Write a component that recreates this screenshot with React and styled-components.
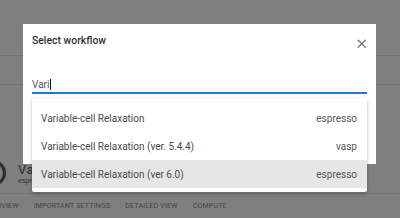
import React from "react";
import styled, { createGlobalStyle } from "styled-components";

const GlobalStyle = createGlobalStyle`
  html, body { margin: 0; padding: 0; }
  body {
    width: 400px;
    height: 218px;
    overflow: hidden;
    font-family: Roboto, "Liberation Sans", Arial, sans-serif;
  }
`;

const Page = styled.div`
  position: relative;
  width: 400px;
  height: 218px;
  overflow: hidden;
  background: #ffffff;
  display: flex;
  flex-direction: column;
`;

const TopBar = styled.div`
  height: 55px;
  flex: none;
  border-bottom: 1px solid #e4e4e4;
`;

const SubBar = styled.div`
  height: 28px;
  flex: none;
  border-bottom: 1px solid #e4e4e4;
`;

const Body = styled.div`
  height: 108px;
  flex: none;
  box-sizing: border-box;
  padding-top: 68px;
  display: flex;
  align-items: center;
  gap: 12px;
  margin-left: -20px;
`;

const Avatar = styled.div`
  width: 20px;
  height: 20px;
  border: 3px solid #5a5a5a;
  border-radius: 50%;
  flex: none;
`;

const CardText = styled.div`
  display: flex;
  flex-direction: column;
  color: #5c5c5c;
  padding-top: 2px;
`;

const CardTitle = styled.div`
  font-size: 13px;
  line-height: 14px;
  letter-spacing: 0.04em;
`;

const CardSub = styled.div`
  font-size: 7px;
  line-height: 9px;
  color: #6a6a6a;
`;

const TabBar = styled.div`
  flex: 1;
  border-top: 1px solid #e8e8e8;
  display: flex;
  align-items: center;
  gap: 15px;
  margin-left: -17px;
`;

const Tab = styled.div`
  font-size: 7px;
  font-weight: 400;
  letter-spacing: 0.03em;
  text-transform: uppercase;
  color: #8c8c8c;
  white-space: nowrap;
`;

const Backdrop = styled.div`
  position: absolute;
  inset: 0;
  background: rgba(0, 0, 0, 0.5);
`;

const Dialog = styled.div`
  position: absolute;
  left: 23px;
  top: 24px;
  width: 353px;
  height: 140px;
  background: #ffffff;
  box-sizing: border-box;
  padding: 0 9px;
  display: flex;
  flex-direction: column;
`;

const Header = styled.div`
  height: 32px;
  display: flex;
  align-items: center;
  justify-content: space-between;
`;

const Title = styled.div`
  font-size: 10.4px;
  font-weight: 500;
  color: rgba(0, 0, 0, 0.85);
`;

const CloseButton = styled.div`
  width: 16px;
  height: 16px;
  margin-right: -3px;
  margin-top: 7px;
  display: flex;
  align-items: center;
  justify-content: center;
  color: #7a7a7a;
`;

const Field = styled.div`
  margin-top: 20px;
  height: 16px;
  border-bottom: 2px solid #1976d2;
  display: flex;
  align-items: center;
  font-size: 10px;
  color: #555555;
`;

const Caret = styled.span`
  display: inline-block;
  width: 1px;
  height: 11px;
  background: #111;
  margin-left: 0.5px;
`;

const Menu = styled.div`
  position: absolute;
  left: 9px;
  top: 74px;
  width: 335px;
  box-sizing: border-box;
  padding: 6px 0 4px;
  background: #ffffff;
  border-radius: 2px;
  box-shadow: 0 2px 4px rgba(0, 0, 0, 0.18), 0 0 2px rgba(0, 0, 0, 0.12);
`;

const Option = styled.div`
  height: 28px;
  display: flex;
  align-items: center;
  justify-content: space-between;
  padding: 0 10px 0 9px;
  font-size: 10px;
  color: #4a4a4a;
  background: ${(p) => (p.$active ? "#e6e6e6" : "transparent")};
`;

const Code = styled.span`
  color: #555555;
`;

const options = [
  { name: "Variable-cell Relaxation", code: "espresso" },
  { name: "Variable-cell Relaxation (ver. 5.4.4)", code: "vasp" },
  { name: "Variable-cell Relaxation (ver 6.0)", code: "espresso", active: true },
];

export default function App() {
  return (
    <>
      <GlobalStyle />
      <Page>
        <TopBar />
        <SubBar />
        <Body>
          <Avatar />
          <CardText>
            <CardTitle>Variable-cell Relaxation</CardTitle>
            <CardSub>espresso</CardSub>
          </CardText>
        </Body>
        <TabBar>
          <Tab>Overview</Tab>
          <Tab>Important settings</Tab>
          <Tab>Detailed view</Tab>
          <Tab>Compute</Tab>
        </TabBar>
        <Backdrop />
        <Dialog>
          <Header>
            <Title>Select workflow</Title>
            <CloseButton>
              <svg width="15.5" height="15.5" viewBox="0 0 24 24" fill="currentColor">
                <path d="M19 6.41 17.59 5 12 10.59 6.41 5 5 6.41 10.59 12 5 17.59 6.41 19 12 13.41 17.59 19 19 17.59 13.41 12z" />
              </svg>
            </CloseButton>
          </Header>
          <Field>
            Vari
            <Caret />
          </Field>
          <Menu>
            {options.map((o) => (
              <Option key={o.name} $active={o.active}>
                <span>{o.name}</span>
                <Code>{o.code}</Code>
              </Option>
            ))}
          </Menu>
        </Dialog>
      </Page>
    </>
  );
}
